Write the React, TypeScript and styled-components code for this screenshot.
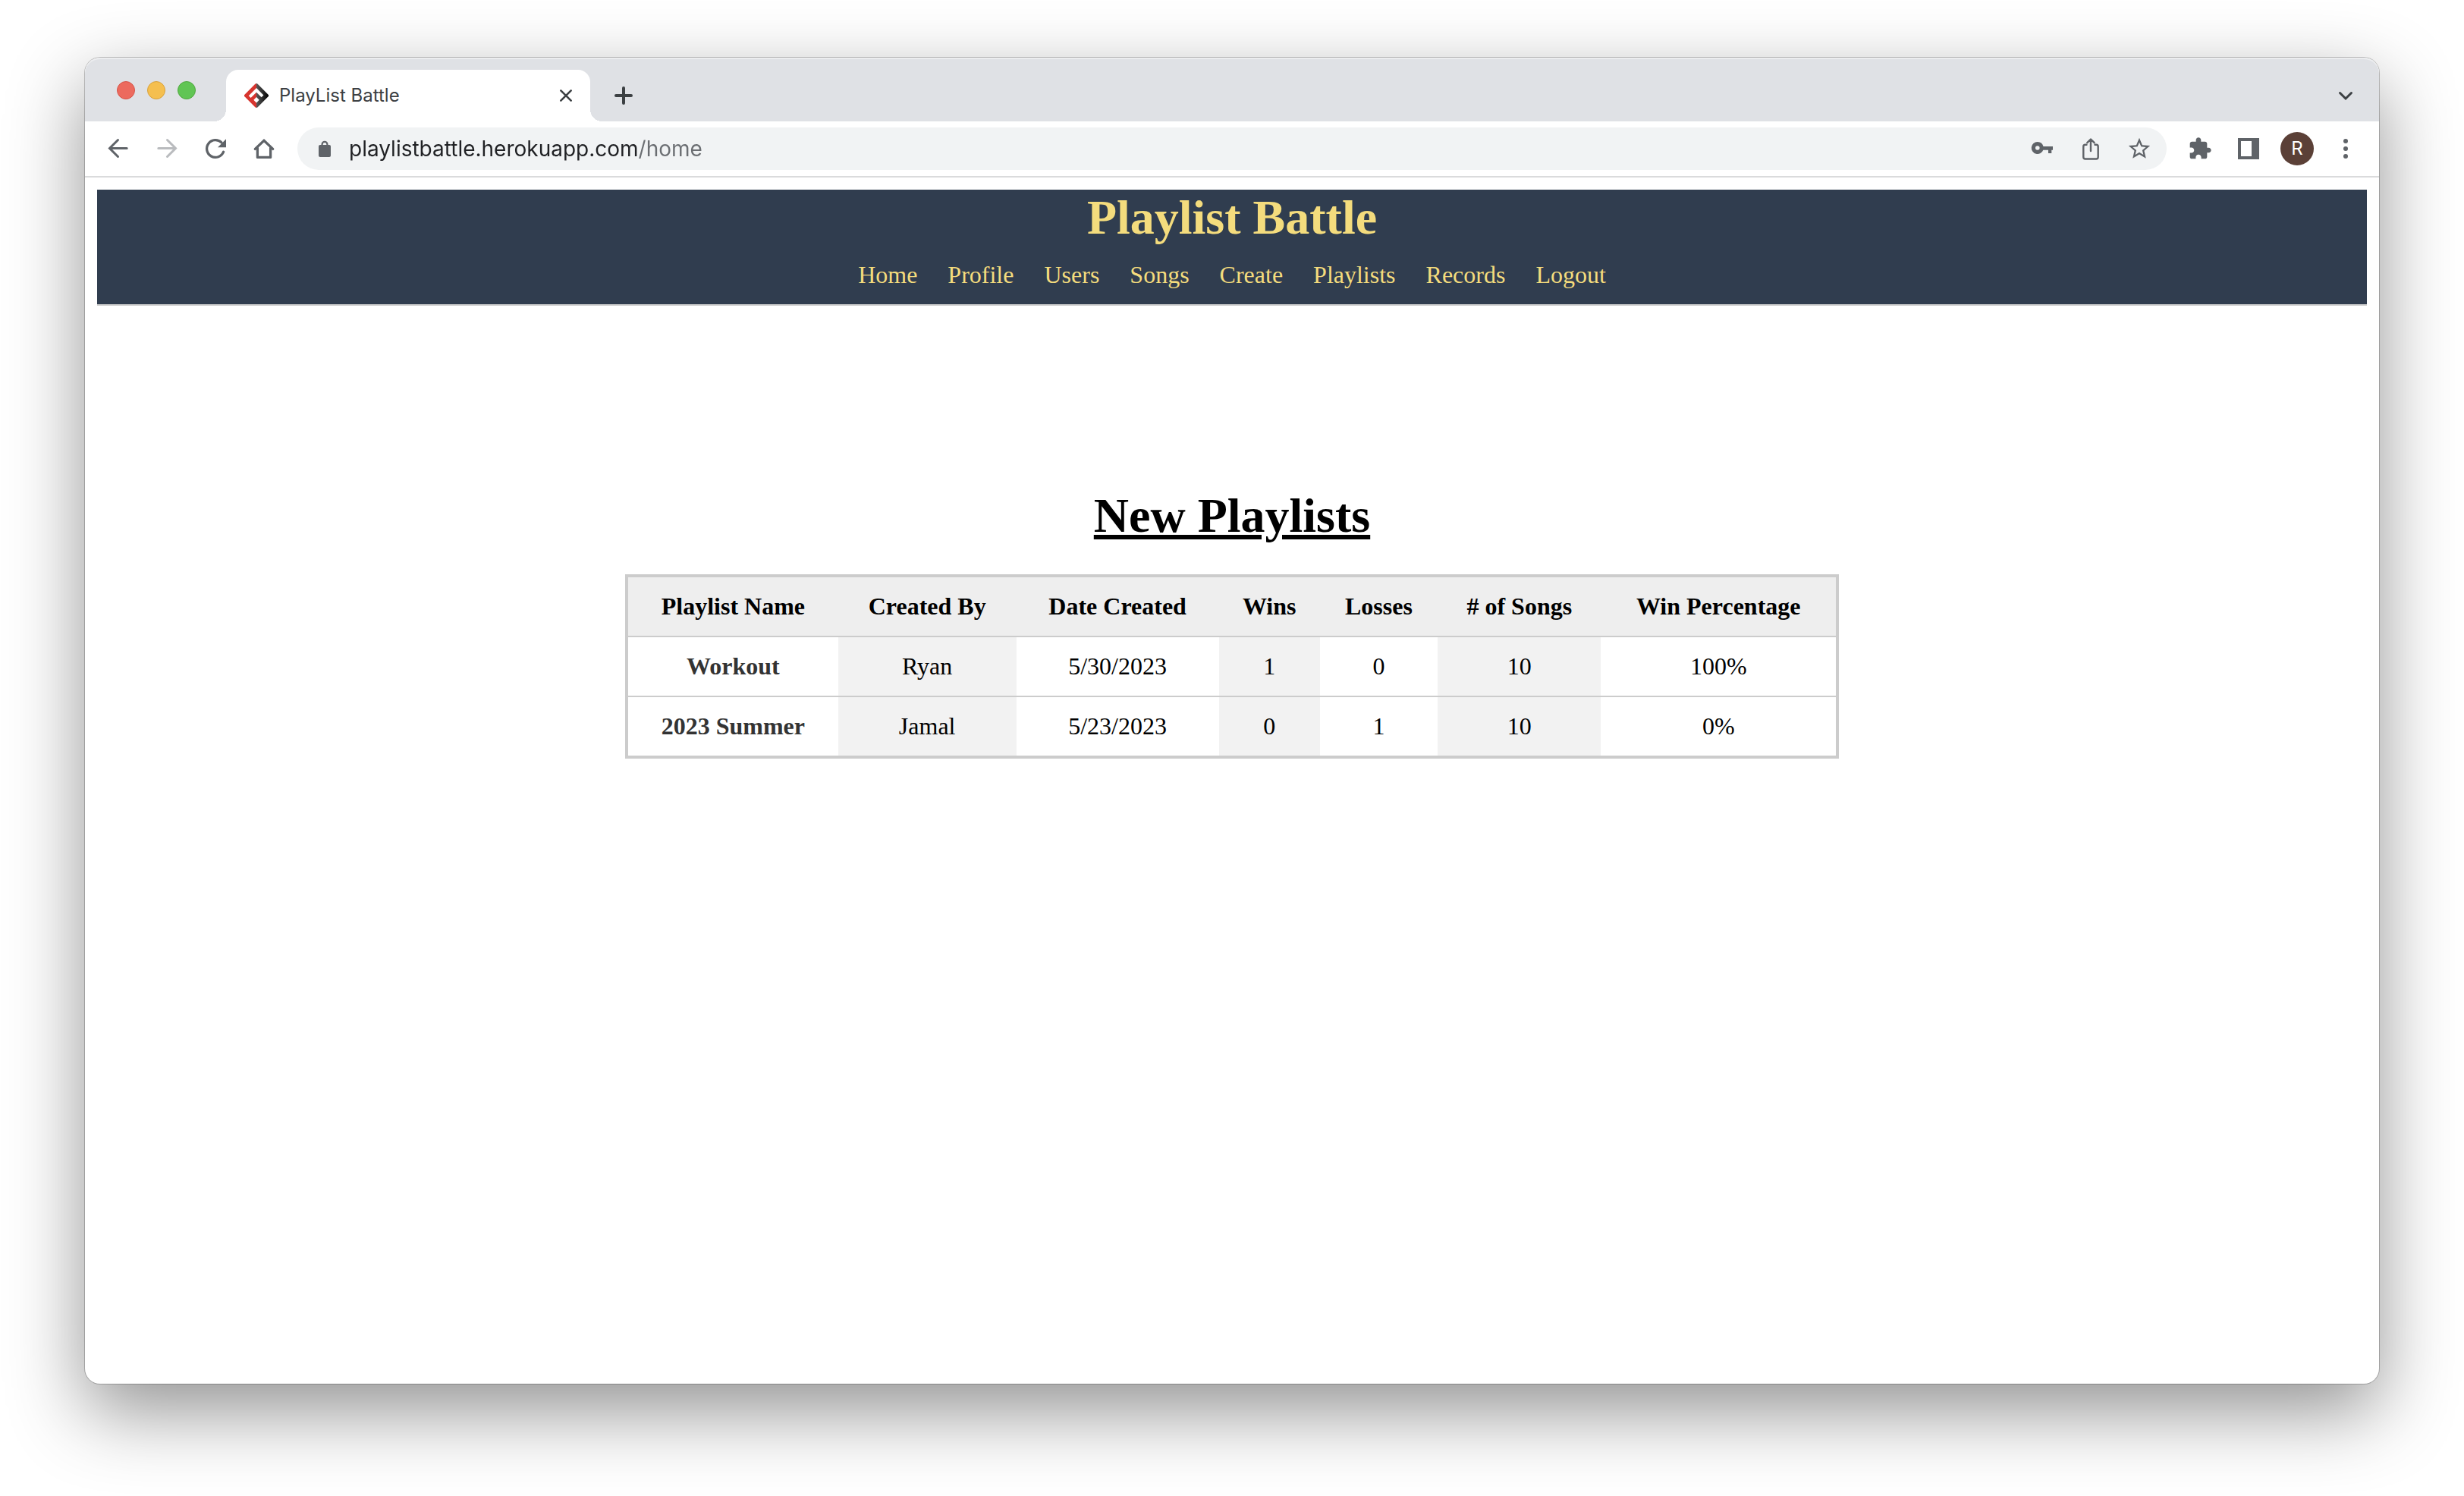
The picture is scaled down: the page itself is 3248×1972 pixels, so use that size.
import React from "react";
import styled, { createGlobalStyle } from "styled-components";

const sans = `Inter, Roboto, "Liberation Sans", sans-serif`;
const serif = `"Liberation Serif", "Times New Roman", serif`;

const GlobalStyle = createGlobalStyle`
  *, *::before, *::after { box-sizing: border-box; }
  body { margin: 0; background: #fff; }
`;

const Desktop = styled.div`
  display: flex;
  flex-direction: column;
  min-height: 100vh;
  padding: 76px 112px 148px;
`;

const BrowserWindow = styled.div`
  display: flex;
  flex: 1;
  flex-direction: column;
  border-radius: 20px;
  background: #fff;
  box-shadow: 0 0 0 1px rgba(0, 0, 0, 0.22), 0 36px 100px rgba(0, 0, 0, 0.43);
`;

const TabStrip = styled.div`
  display: flex;
  align-items: flex-end;
  height: 84px;
  padding: 0 28px 0 42px;
  border-radius: 20px 20px 0 0;
  background: #dfe1e5;
  box-shadow: inset 0 2px 0 rgba(255, 255, 255, 0.4);
`;

const TrafficLights = styled.div`
  display: flex;
  gap: 16px;
  margin-right: 40px;
  padding-bottom: 29px;
`;

const Light = styled.button<{ $fill: string; $edge: string }>`
  width: 24px;
  height: 24px;
  padding: 0;
  border: 1px solid ${(p) => p.$edge};
  border-radius: 50%;
  background: ${(p) => p.$fill};
`;

const Tab = styled.div`
  position: relative;
  display: flex;
  align-items: center;
  width: 480px;
  height: 68px;
  padding: 0 16px 0 24px;
  border-radius: 16px 16px 0 0;
  background: #fff;
  color: #3c4043;
  font: 24px/32px ${sans};

  &::before,
  &::after {
    content: "";
    position: absolute;
    bottom: 0;
    width: 16px;
    height: 16px;
  }
  &::before {
    right: 100%;
    background: radial-gradient(circle at 0 0, transparent 16px, #fff 16px);
  }
  &::after {
    left: 100%;
    background: radial-gradient(circle at 100% 0, transparent 16px, #fff 16px);
  }
`;

const TabTitle = styled.span`
  flex: 1;
  margin-left: 14px;
`;

const IconButton = styled.button<{ $muted?: boolean }>`
  display: flex;
  align-items: center;
  justify-content: center;
  flex: none;
  width: 32px;
  height: 32px;
  padding: 0;
  border: 0;
  background: none;
  color: ${(p) => (p.$muted ? "#b9bbbe" : "#5f6368")};

  svg { flex: none; overflow: visible; }
`;

const StripButton = styled(IconButton)`
  margin: 0 0 18px 28px;
  color: #3c4043;
  &:last-child { margin-left: auto; }
`;

const Toolbar = styled.div`
  display: flex;
  align-items: center;
  gap: 32px;
  height: 74px;
  padding: 0 28px;
  border-bottom: 2px solid #dadbdc;
`;

const Omnibox = styled.div`
  display: flex;
  flex: 1;
  align-items: center;
  gap: 32px;
  height: 56px;
  margin: 0 -4px;
  padding: 0 20px;
  border-radius: 28px;
  background: #f1f3f4;
`;

const Address = styled.input`
  flex: 1;
  min-width: 0;
  height: 40px;
  margin-left: -16px;
  padding: 0;
  border: 0;
  outline: 0;
  background: linear-gradient(to right, #202124 382px, #6b6e72 382px);
  background-clip: text;
  -webkit-background-clip: text;
  -webkit-text-fill-color: transparent;
  font: 28px/40px ${sans};
`;

const Avatar = styled.button`
  flex: none;
  width: 44px;
  height: 44px;
  margin: 0 -6px;
  padding: 0;
  border: 0;
  border-radius: 50%;
  background: #5b4037;
  color: #fff;
  font: 24px/44px ${sans};
`;

const Page = styled.div`
  flex: 1;
  padding: 16px;
  font: 32px/37px ${serif};
`;

const SiteHeader = styled.header`
  padding-bottom: 20px;
  border-bottom: 2px solid #ccc;
  background: #303d4f;
  color: #f4dc7d;
  text-align: center;
`;

const SiteTitle = styled.h1`
  margin: 0 0 21px;
  font-size: 64px;
  line-height: 73px;
`;

const Nav = styled.nav`
  display: flex;
  justify-content: center;
  gap: 40px;
`;

const NavLink = styled.a`
  color: inherit;
  text-decoration: none;
`;

const Main = styled.main`
  display: flex;
  flex-direction: column;
  align-items: center;
  gap: 41px;
  padding-top: 240px;
`;

const Heading = styled.h2`
  margin: 0;
  font-size: 64px;
  line-height: 73px;
  text-decoration: underline;
  text-decoration-thickness: 6px;
  text-underline-offset: 4px;
`;

const Table = styled.table`
  width: 1600px;
  max-width: 100%;
  border: 4px solid #ccc;
  border-collapse: collapse;
  text-align: center;

  th, td { padding: 20px; }
  tbody tr { border-top: 2px solid #ccc; }
  thead { background: #eee; }
  tbody th { color: #333; }
  tbody tr > :nth-child(even) { background: #f2f2f2; }
`;

const Icon = ({ size = 32, box = 32, children }: { size?: number; box?: number; children: React.ReactNode }) => (
  <svg width={size} height={size} viewBox={`0 0 ${box} ${box}`} fill="none" stroke="none" aria-hidden="true">
    {children}
  </svg>
);

const line = { stroke: "currentColor", strokeWidth: 3, strokeLinecap: "round", strokeLinejoin: "round" } as const;

const Favicon = () => (
  <Icon>
    <defs>
      <linearGradient id="dark" x1="16" y1="0" x2="32" y2="0" gradientUnits="userSpaceOnUse">
        <stop offset="0" stopColor="#5a5a5a" />
        <stop offset="1" stopColor="#000" />
      </linearGradient>
    </defs>
    <path d="M16 0Q15 0 14.3 0.700L0.700 14.500a2 2 0 0 0 0 3L14.300 31.300Q15 32 16 32z" fill="#d7352f" />
    <path d="M16 0Q17 0 17.700 0.700L31.300 14.500a2 2 0 0 1 0 3L17.700 31.300Q17 32 16 32z" fill="url(#dark)" />
    <path d="M7.200 17.600L16 8.800L24 16.800" stroke="#fff" strokeWidth="4" />
    <path d="M16 18l3.700 3.700l-3.700 3.700l-3.700-3.700z" fill="#fff" />
  </Icon>
);

const navItems = ["Home", "Profile", "Users", "Songs", "Create", "Playlists", "Records", "Logout"];
const columns = ["Playlist Name", "Created By", "Date Created", "Wins", "Losses", "# of Songs", "Win Percentage"];
const playlists = [
  ["Workout", "Ryan", "5/30/2023", "1", "0", "10", "100%"],
  ["2023 Summer", "Jamal", "5/23/2023", "0", "1", "10", "0%"],
];

export default function App() {
  return (
    <Desktop>
      <GlobalStyle />
      <BrowserWindow>
        <TabStrip>
          <TrafficLights>
            <Light aria-label="Close window" $fill="#ec6a5e" $edge="#d65448" />
            <Light aria-label="Minimize window" $fill="#f5bf4f" $edge="#d8a13c" />
            <Light aria-label="Zoom window" $fill="#61c554" $edge="#50a73f" />
          </TrafficLights>
          <Tab>
            <Favicon />
            <TabTitle>PlayList Battle</TabTitle>
            <IconButton aria-label="Close tab">
              <Icon><path d="M9.300 9.300L22.700 22.700M22.700 9.300L9.300 22.700" {...line} stroke="#3c4043" strokeWidth={2.6} /></Icon>
            </IconButton>
          </Tab>
          <StripButton aria-label="New tab">
            <Icon><path d="M16 6V26M6 16H26" {...line} strokeWidth={4} /></Icon>
          </StripButton>
          <StripButton aria-label="Search tabs">
            <Icon><path d="M8.500 12.500L16 20L23.500 12.500" {...line} strokeLinejoin="miter" /></Icon>
          </StripButton>
        </TabStrip>

        <Toolbar>
          <IconButton aria-label="Back">
            <Icon><path d="M27.200 15.500H4.800M15.500 4.500L4.500 15.500L15.500 26.500" {...line} strokeLinejoin="miter" /></Icon>
          </IconButton>
          <IconButton aria-label="Forward" $muted>
            <Icon><path d="M4.800 15.500H27.200M16.500 4.500L27.500 15.500L16.500 26.500" {...line} strokeLinejoin="miter" /></Icon>
          </IconButton>
          <IconButton aria-label="Reload">
            <Icon>
              <path d="M26.600 20.200A11.400 11.400 0 1 1 24 7.900" stroke="currentColor" strokeWidth="3.300" strokeLinecap="round" />
              <path d="M30 3.300V14.300H19z" fill="currentColor" />
            </Icon>
          </IconButton>
          <IconButton aria-label="Home">
            <Icon>
              <path d="M4.300 16.400L16 5.200L27.700 16.400" {...line} strokeWidth={3.3} strokeLinejoin="miter" />
              <path d="M7.400 15V27.400H24.600V15" {...line} strokeWidth={3.3} />
            </Icon>
          </IconButton>

          <Omnibox>
            <IconButton aria-label="Site information">
              <Icon>
                <rect x="8" y="11" width="16" height="16" rx="2" fill="currentColor" />
                <path d="M12.600 12V10.200a3.400 3.400 0 0 1 6.800 0V12" stroke="currentColor" strokeWidth="2.200" />
              </Icon>
            </IconButton>
            <Address aria-label="Address" spellCheck={false} defaultValue="playlistbattle.herokuapp.com/home" />
            <IconButton aria-label="Saved passwords">
              <Icon>
                <path
                  fill="currentColor"
                  fillRule="evenodd"
                  d="M9.800 7a8 8 0 1 0 7.500 10.700H24V22h4.300v-4.300H30V13H17.500A8 8 0 0 0 9.800 7zM9.800 12.200a2.800 2.800 0 1 1 0 5.600a2.800 2.800 0 0 1 0-5.600z"
                />
              </Icon>
            </IconButton>
            <IconButton aria-label="Share this page">
              <Icon>
                <path
                  d="M10.500 10.800H8.800a2.500 2.500 0 0 0-2.500 2.500V27a2.500 2.500 0 0 0 2.500 2.500H23.200a2.500 2.500 0 0 0 2.500-2.500V13.300a2.500 2.500 0 0 0-2.500-2.500H21.500M16 19V4M11.300 8.200L16 3.500L20.700 8.200"
                  {...line}
                  strokeWidth={2.4}
                />
              </Icon>
            </IconButton>
            <IconButton aria-label="Bookmark this tab">
              <Icon size={34} box={24}>
                <path
                  fill="currentColor"
                  d="M22 9.240l-7.190-.620L12 2 9.190 8.630 2 9.240l5.460 4.730L5.820 21 12 17.270 18.180 21l-1.630-7.030L22 9.240zM12 15.400l-3.760 2.270 1-4.280-3.320-2.880 4.380-.380L12 6.100l1.710 4.040 4.380.380-3.320 2.880 1 4.280L12 15.400z"
                />
              </Icon>
            </IconButton>
          </Omnibox>

          <IconButton aria-label="Extensions">
            <Icon box={24}>
              <path
                fill="currentColor"
                d="M20.500 11H19V7c0-1.100-.9-2-2-2h-4V3.500C13 2.120 11.880 1 10.500 1S8 2.120 8 3.500V5H4c-1.100 0-1.990.9-1.990 2v3.800H3.500c1.490 0 2.700 1.210 2.700 2.700s-1.210 2.700-2.700 2.700H2V20c0 1.100.9 2 2 2h3.800v-1.500c0-1.490 1.210-2.700 2.700-2.700 1.490 0 2.700 1.210 2.700 2.700V22H17c1.100 0 2-.9 2-2v-4h1.500c1.380 0 2.500-1.120 2.500-2.500S21.880 11 20.500 11z"
              />
            </Icon>
          </IconButton>
          <IconButton aria-label="Side panel">
            <Icon><path fill="currentColor" fillRule="evenodd" d="M2 2H30V30H2zM6 6V26H20V6z" /></Icon>
          </IconButton>
          <Avatar aria-label="Profile R">R</Avatar>
          <IconButton aria-label="Browser menu">
            <Icon>
              <g fill="currentColor">
                <circle cx="16" cy="6" r="3" />
                <circle cx="16" cy="16" r="3" />
                <circle cx="16" cy="26" r="3" />
              </g>
            </Icon>
          </IconButton>
        </Toolbar>

        <Page>
          <SiteHeader>
            <SiteTitle>Playlist Battle</SiteTitle>
            <Nav>
              {navItems.map((item) => (
                <NavLink key={item} href={`#${item.toLowerCase()}`}>{item}</NavLink>
              ))}
            </Nav>
          </SiteHeader>
          <Main>
            <Heading>New Playlists</Heading>
            <Table>
              <thead>
                <tr>{columns.map((c) => <th key={c} scope="col">{c}</th>)}</tr>
              </thead>
              <tbody>
                {playlists.map(([name, ...cells]) => (
                  <tr key={name}>
                    <th scope="row">{name}</th>
                    {cells.map((cell, i) => <td key={i}>{cell}</td>)}
                  </tr>
                ))}
              </tbody>
            </Table>
          </Main>
        </Page>
      </BrowserWindow>
    </Desktop>
  );
}
